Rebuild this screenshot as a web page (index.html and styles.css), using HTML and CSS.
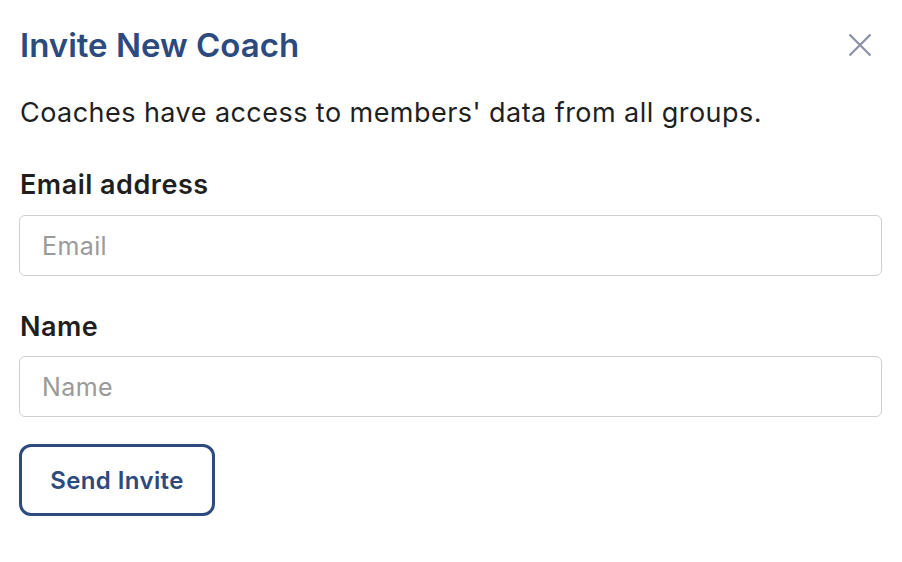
FILE: index.html
```html
<!DOCTYPE html>
<html>
<head>
<meta charset="utf-8">
<link rel="stylesheet" href="styles.css">
</head>
<body>
<div class="modal">
  <div class="header">
    <h1 class="title">Invite New Coach</h1>
    <button class="close" aria-label="Close">
      <svg width="24" height="24" viewBox="0 0 24 24"><path d="M1.5 1.5 L22.5 22.5 M22.5 1.5 L1.5 22.5" stroke="#8b90a7" stroke-width="2.2" fill="none"/></svg>
    </button>
  </div>
  <p class="desc">Coaches have access to members' data from all groups.</p>
  <label class="label first">Email address</label>
  <input class="field f1" type="text" placeholder="Email">
  <label class="label second">Name</label>
  <input class="field f2" type="text" placeholder="Name">
  <button class="send">Send Invite</button>
</div>
</body>
</html>
```
FILE: styles.css
```css
html, body { margin: 0; padding: 0; background: #fff; }
body { font-family: "Inter", "Liberation Sans", sans-serif; color: #1f1f1f; }
.modal { padding: 24px 20px 0 19px; display: flex; flex-direction: column; }
.header { display: flex; justify-content: space-between; align-items: center; height: 42px; }
.title { margin: 0 0 0 1px; font-size: 33px; line-height: 42px; font-weight: 600; color: #2c4a7e; letter-spacing: 0; }
.close { background: none; border: none; padding: 0; margin-right: 10px; width: 24px; height: 24px; }
.desc { margin: 32px 0 0 1px; font-size: 27px; line-height: 30px; letter-spacing: 0.45px; }
.label { margin: 42px 0 0 1px; font-size: 27px; font-weight: 600; line-height: 30px; letter-spacing: 0.5px; }
.label.second { margin-top: 36px; }
.field { height: 61px; box-sizing: border-box; border: 1px solid #cfcfcf; border-radius: 6px; padding: 0 22px; font-family: inherit; font-size: 25px; letter-spacing: 0.4px; color: #333; }
.f1 { margin-top: 15px; }
.f2 { margin-top: 14px; }
.field::placeholder { color: #9a9a9a; }
.send { align-self: flex-start; margin-top: 27px; width: 196px; height: 72px; border: 3px solid #2c4a7e; border-radius: 12px; background: #fff; color: #2c4a7e; font-family: inherit; font-size: 24px; font-weight: 600; letter-spacing: 0.4px; }
```
